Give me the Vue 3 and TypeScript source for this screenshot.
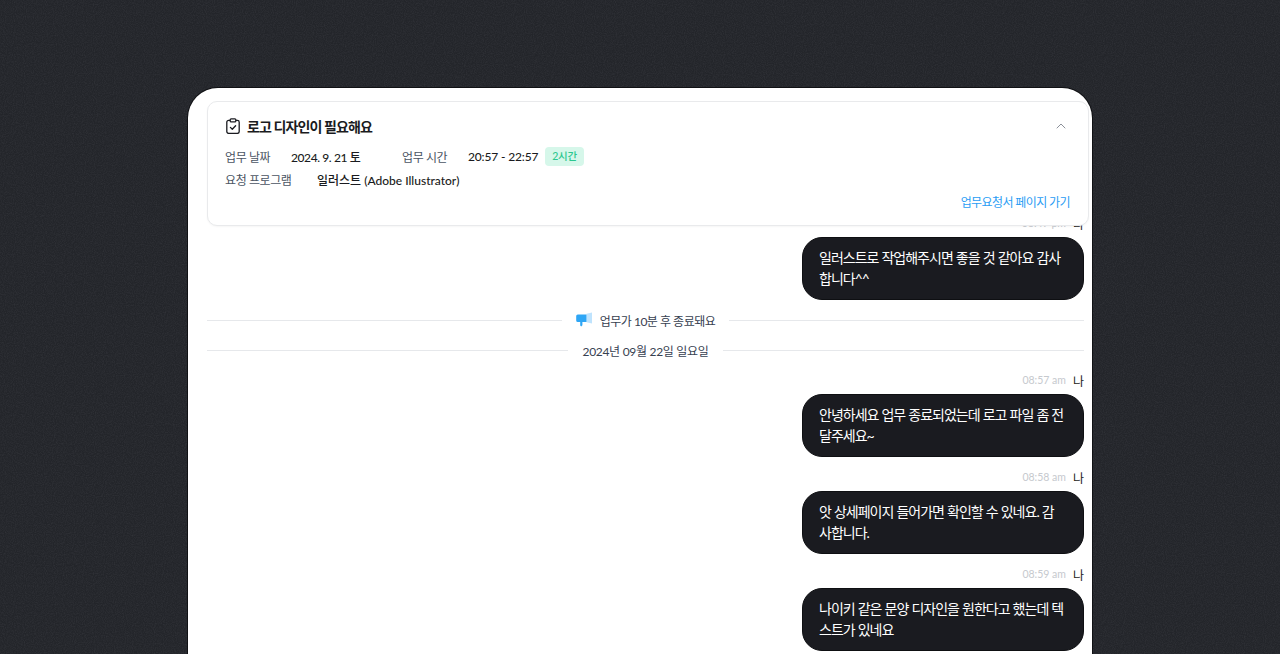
<script setup lang="ts">
interface Message {
  time: string
  text: string
}

const messages: Message[] = [
  { time: '08:57 am', text: '안녕하세요 업무 종료되었는데 로고 파일 좀 전달주세요~' },
  { time: '08:58 am', text: '앗 상세페이지 들어가면 확인할 수 있네요. 감사합니다.' },
  { time: '08:59 am', text: '나이키 같은 문양 디자인을 원한다고 했는데 텍스트가 있네요' },
]
</script>

<template>
  <div class="page">
    <svg class="grain" width="1280" height="654">
      <filter id="grain-noise">
        <feTurbulence type="fractalNoise" baseFrequency="0.9" numOctaves="2" seed="4" />
        <feColorMatrix values="0 0 0 0 0.5  0 0 0 0 0.5  0 0 0 0 0.55  0 0 0 0.9 -0.3" />
      </filter>
      <rect width="1280" height="654" filter="url(#grain-noise)" opacity="0.16" />
    </svg>
    <div class="card">
      <section class="info">
        <header class="info-head">
          <svg class="clip" width="14" height="16" viewBox="0 0 14 16" fill="none" stroke="#1a1b20" stroke-width="1.3">
            <rect x="0.8" y="2.4" width="12.4" height="13" rx="1.8" />
            <rect x="4.2" y="0.8" width="5.6" height="3" rx="0.9" fill="#fff" />
            <path d="M4.4 9.4l1.9 1.9 3.3-3.6" stroke-linecap="round" stroke-linejoin="round" />
          </svg>
          <h2 class="info-title">로고 디자인이 필요해요</h2>
          <svg class="chevron" width="10" height="6" viewBox="0 0 10 6" fill="none" stroke="#8b9099" stroke-width="1">
            <path d="M1 5l4-4 4 4" stroke-linecap="round" stroke-linejoin="round" />
          </svg>
        </header>
        <div class="info-row">
          <span class="label date-label">업무 날짜</span>
          <span class="value date-value">2024. 9. 21 토</span>
          <span class="label time-label">업무 시간</span>
          <span class="value time-value">20:57 - 22:57</span>
          <span class="badge">2시간</span>
        </div>
        <div class="info-row">
          <span class="label program-label">요청 프로그램</span>
          <span class="value program-value">일러스트 (Adobe Illustrator)</span>
        </div>
        <a class="info-link">업무요청서 페이지 가기</a>
      </section>

      <div class="list">
        <div class="msg">
          <div class="meta"><span class="time">08:47 pm</span><span class="who">나</span></div>
          <p class="bubble">일러스트로 작업해주시면 좋을 것 같아요 감사합니다^^</p>
        </div>

        <div class="divider">
          <span class="rule" />
          <svg width="16" height="16" viewBox="0 0 16 16">
            <path d="M10.5 1.8L16 .4v11.2l-5.5-1.4z" fill="#bfe3fd" />
            <path d="M1.8 2.4h8.7v7.6H6.4v3.2l-1.2 1.4-1-1.2V10H1.8A1.6 1.6 0 0 1 .2 8.4V4a1.6 1.6 0 0 1 1.6-1.6z" fill="#2ea6f5" />
          </svg>
          <span class="divider-text with-icon">업무가 10분 후 종료돼요</span>
          <span class="rule" />
        </div>

        <div class="divider">
          <span class="rule" />
          <span class="divider-text date-text">2024년 09월 22일 일요일</span>
          <span class="rule" />
        </div>

        <div v-for="m in messages" :key="m.time" class="msg">
          <div class="meta"><span class="time">{{ m.time }}</span><span class="who">나</span></div>
          <p class="bubble">{{ m.text }}</p>
        </div>
      </div>
    </div>
  </div>
</template>

<style>
html,
body {
  margin: 0;
  background: #23252a;
}
</style>

<style scoped>
.page {
  position: relative;
  height: 654px;
  box-sizing: border-box;
  padding: 88px 188px 0;
  overflow: hidden;
  background-color: #23252a;
  font-family: Lato, "Noto Sans CJK KR", sans-serif;
}

.grain {
  position: absolute;
  top: 0;
  left: 0;
}

.card {
  position: relative;
  height: 600px;
  background: #fff;
  border-radius: 30px 30px 0 0;
  box-shadow: 0 0 0 1px #101114;
}

.info {
  position: absolute;
  top: 13px;
  left: 19px;
  width: 882px;
  height: 125px;
  box-sizing: border-box;
  padding: 14px 18px 0 17px;
  background: #fff;
  border: 1px solid #e9eaec;
  border-radius: 10px;
  box-shadow: 0 1px 2px rgb(0 0 0 / 0.04);
  z-index: 1;
}

.info-head {
  display: flex;
  align-items: center;
  height: 20px;
  margin-bottom: 9px;
}

.clip {
  margin: 0 7px 0 1px;
}

.info-title {
  margin: 0;
  font-size: 14px;
  font-weight: 600;
  letter-spacing: -0.9px;
  color: #1a1b20;
}

.chevron {
  margin-left: auto;
  margin-right: 4px;
}

.info-row {
  display: flex;
  align-items: center;
  height: 23px;
  font-size: 12px;
}

.label {
  color: #4b5563;
  letter-spacing: -0.4px;
}

.value {
  color: #1a1b20;
  font-weight: 500;
}

.date-label {
  width: 66px;
}

.date-value {
  width: 111px;
  letter-spacing: -0.4px;
}

.time-label {
  width: 66px;
}

.time-value {
  letter-spacing: -0.15px;
}

.program-label {
  width: 92px;
}

.badge {
  margin-left: 7px;
  padding: 3px 7px;
  font-size: 10.5px;
  font-weight: 500;
  line-height: 13px;
  letter-spacing: -0.3px;
  color: #2cc78f;
  background: #d6f7ea;
  border-radius: 4px;
}

.info-link {
  display: block;
  margin-top: 2px;
  font-size: 12px;
  line-height: 20px;
  letter-spacing: -0.6px;
  text-align: right;
  color: #2a9df4;
}

.list {
  display: flex;
  flex-direction: column;
  gap: 10px;
  height: 100%;
  box-sizing: border-box;
  overflow: hidden;
  padding: 125px 8px 0 19px;
}

.msg {
  display: flex;
  flex-direction: column;
  align-items: flex-end;
  flex-shrink: 0;
}

.meta {
  display: flex;
  align-items: center;
  gap: 7px;
  height: 20px;
  margin-bottom: 4px;
}

.time {
  font-size: 10.5px;
  color: #c6c9ce;
}

.who {
  font-size: 12px;
  color: #1a1b20;
}

.bubble {
  box-sizing: border-box;
  width: 282px;
  height: 63px;
  margin: 0;
  padding: 9px 18px 9px 16px;
  font-size: 14px;
  line-height: 21px;
  letter-spacing: -1px;
  word-spacing: 0.5px;
  color: #fff;
  background: #1a1b20;
  border: 1px solid #0e0f12;
  border-radius: 20px;
  word-break: break-all;
}

.divider {
  display: flex;
  align-items: center;
  flex-shrink: 0;
  height: 20px;
  font-size: 12px;
  letter-spacing: -0.5px;
  color: #374151;
}

.rule {
  flex: 1;
  height: 1px;
  background: #e6e8eb;
}

.divider svg {
  margin-left: 14px;
}

.divider-text {
  padding: 0 14px;
}

.divider-text.with-icon {
  padding-left: 8px;
}

.divider-text.date-text {
  letter-spacing: -0.3px;
}
</style>
